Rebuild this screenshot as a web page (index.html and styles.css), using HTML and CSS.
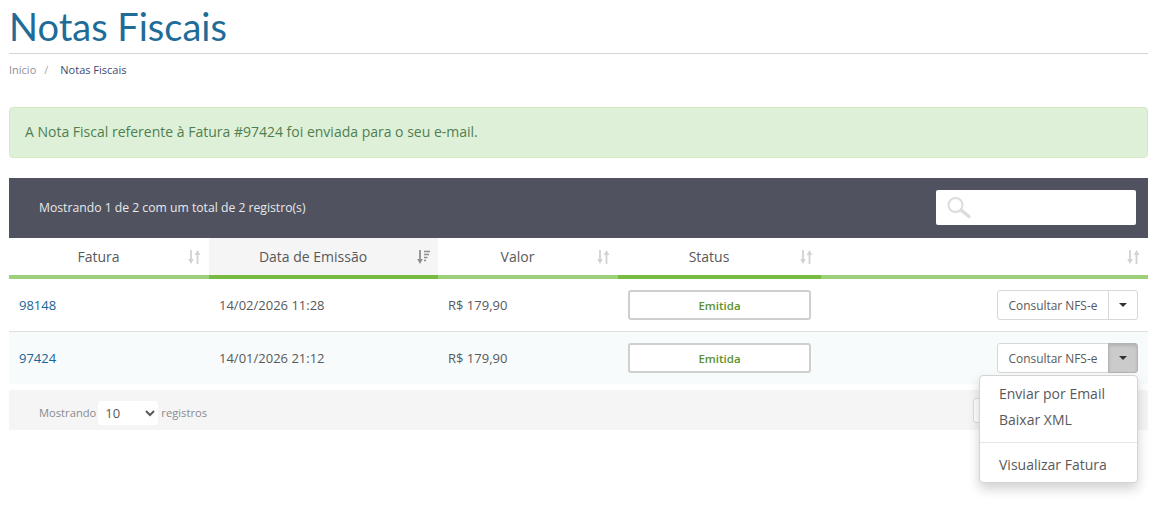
FILE: index.html
```html
<!DOCTYPE html>
<html lang="pt-BR">
<head>
<meta charset="utf-8">
<title>Notas Fiscais</title>
<link rel="stylesheet" href="styles.css">
</head>
<body>
<svg class="defs" width="0" height="0" aria-hidden="true">
  <symbol id="sort" viewBox="0 0 14 14">
    <path d="M4 0v11" fill="none" stroke="currentColor" stroke-width="1.8"/>
    <path d="M1.2 9h5.6L4 14z" fill="currentColor"/>
    <path d="M10.5 14V3" fill="none" stroke="currentColor" stroke-width="1.8"/>
    <path d="M7.7 5h5.6L10.5 0z" fill="currentColor"/>
  </symbol>
  <symbol id="sort-active" viewBox="0 0 14 14">
    <path d="M4 0v11" fill="none" stroke="currentColor" stroke-width="1.8"/>
    <path d="M1.2 9h5.6L4 14z" fill="currentColor"/>
    <path d="M8 1.5h6M8 4.5h5M8 7.5h3.5M8 10.5h2" stroke="currentColor" stroke-width="1.6"/>
  </symbol>
</svg>
<main class="page">
  <h1 class="title">Notas Fiscais</h1>
  <nav class="crumbs"><a href="#">Início</a><span class="sep">/</span><span class="current">Notas Fiscais</span></nav>
  <div class="alert">A Nota Fiscal referente à Fatura #97424 foi enviada para o seu e-mail.</div>

  <section class="listing">
    <header class="list-head">
      <span>Mostrando 1 de 2 com um total de 2 registro(s)</span>
      <label class="search">
        <svg class="search-icon" viewBox="0 0 26 24" width="26" height="24"><circle cx="9.5" cy="9" r="7" fill="none" stroke="currentColor" stroke-width="2"/><path d="m15 14 8 6.5" stroke="currentColor" stroke-width="3.4" stroke-linecap="round"/></svg>
        <input type="text" aria-label="Buscar">
      </label>
    </header>
    <table class="grid">
      <colgroup><col class="c1"><col class="c2"><col class="c3"><col class="c4"><col></colgroup>
      <thead>
        <tr>
          <th><span class="th-label">Fatura</span><svg class="sort-icon"><use href="#sort"/></svg></th>
          <th class="sorted"><span class="th-label">Data de Emissão</span><svg class="sort-icon"><use href="#sort-active"/></svg></th>
          <th><span class="th-label">Valor</span><svg class="sort-icon"><use href="#sort"/></svg></th>
          <th class="status-head"><span class="th-label">Status</span><svg class="sort-icon"><use href="#sort"/></svg></th>
          <th><svg class="sort-icon"><use href="#sort"/></svg></th>
        </tr>
      </thead>
      <tbody>
        <tr>
          <td><a href="#" class="id">98148</a></td>
          <td>14/02/2026 11:28</td>
          <td>R$ 179,90</td>
          <td><span class="status">Emitida</span></td>
          <td class="actions"><span class="split"><button class="btn">Consultar NFS-e</button><button class="caret-btn"><i class="caret"></i></button></span></td>
        </tr>
        <tr class="hover">
          <td><a href="#" class="id">97424</a></td>
          <td>14/01/2026 21:12</td>
          <td>R$ 179,90</td>
          <td><span class="status">Emitida</span></td>
          <td class="actions"><span class="split"><button class="btn">Consultar NFS-e</button><button class="caret-btn open"><i class="caret"></i></button></span></td>
        </tr>
      </tbody>
    </table>
    <footer class="list-foot">
      <span>Mostrando</span>
      <select class="size" aria-label="Registros"><option>10</option></select>
      <span>registros</span>
      <span class="pager"></span>
    </footer>
    <ul class="menu">
      <li><a href="#">Enviar por Email</a></li>
      <li><a href="#">Baixar XML</a></li>
      <li class="divider"></li>
      <li><a href="#">Visualizar Fatura</a></li>
    </ul>
  </section>
</main>
</body>
</html>
```
FILE: styles.css
```css
* { box-sizing: border-box; }
html, body { margin: 0; }
body {
  font-family: "Open Sans", "Liberation Sans", sans-serif;
  font-size: 13px;
  color: #58595b;
  background: #fff;
  height: 513px;
  overflow: hidden;
}
.defs { position: absolute; }
.page { padding: 0 20px 0 9px; }
.title {
  margin: 0;
  height: 54px;
  padding-top: 4px;
  font-family: Lato, "Open Sans", sans-serif;
  font-weight: 400;
  font-size: 38px;
  line-height: 44px;
  color: #1f6c99;
  border-bottom: 1px solid #d5d5d5;
}
.crumbs {
  height: 53px;
  padding-top: 9px;
  font-size: 11px;
  line-height: 14px;
}
.crumbs a { color: #8f9097; text-decoration: none; }
.crumbs .sep { color: #a9a9ad; margin: 0 12px 0 8px; }
.crumbs .current { color: #3c4a72; }
.alert {
  height: 51px;
  padding: 0 15px;
  line-height: 48px;
  font-size: 14px;
  color: #4f7f50;
  background: #dff0d8;
  border: 1px solid #d6e9c6;
  border-radius: 4px;
}
.listing { position: relative; margin-top: 20px; }
.list-head {
  height: 60px;
  padding: 0 12px 2px 30px;
  display: flex;
  align-items: center;
  justify-content: space-between;
  background: #50535f;
  color: #e8e8ea;
  font-size: 12.2px;
}
.search {
  position: relative;
  display: block;
  width: 200px;
  height: 35px;
  background: #fff;
  border-radius: 2px;
}
.search input {
  width: 100%;
  height: 100%;
  border: 0;
  background: transparent;
}
.search-icon {
  position: absolute;
  left: 10px;
  top: 6px;
  color: #dcdcdc;
}
.grid {
  width: 100%;
  border-collapse: separate;
  border-spacing: 0;
  table-layout: fixed;
}
.c1 { width: 200px; }
.c2 { width: 229px; }
.c3 { width: 180px; }
.c4 { width: 203px; }
.grid th {
  position: relative;
  height: 41px;
  padding: 0 21px 0 0;
  font-weight: 400;
  font-size: 14px;
  color: #58595b;
  text-align: center;
  border-bottom: 4px solid #9dd07a;
}
.grid th.sorted { background: #f5f5f5; border-bottom-color: #77bb41; }
.grid th.status-head { border-bottom-color: #77bb41; }
.sort-icon {
  position: absolute;
  right: 8px;
  top: 12px;
  width: 14px;
  height: 14px;
  color: #d2d2d2;
}
.sorted .sort-icon { color: #8e8e8e; }
.grid td {
  height: 53px;
  padding: 0 10px;
  font-size: 13px;
  border-bottom: 1px solid #dfdfdf;
  vertical-align: middle;
}
.grid tr:last-child td { height: 52px; border-bottom: 0; }
.hover td { background: #f7fbfc; }
.id { color: #1a6595; text-decoration: none; }
.status {
  display: block;
  width: 183px;
  height: 30px;
  line-height: 27px;
  text-align: center;
  font-size: 11.5px;
  font-weight: 600;
  color: #5b9130;
  background: #fff;
  border: 2px solid #cfcfcf;
  border-radius: 3px;
}
.actions { text-align: right; }
.split { display: inline-flex; vertical-align: middle; }
.btn, .caret-btn {
  height: 30px;
  font: inherit;
  font-size: 11.9px;
  color: #58595b;
  background: #fff;
  border: 1px solid #d7d7d7;
  padding: 0;
}
.btn { width: 112px; border-radius: 3px 0 0 3px; }
.caret-btn {
  width: 30px;
  margin-left: -1px;
  border-radius: 0 3px 3px 0;
  display: flex;
  align-items: center;
  justify-content: center;
}
.caret-btn.open {
  background: #cbcbcb;
  border-color: #b4b4b4;
  box-shadow: inset 0 2px 3px rgba(0, 0, 0, .12);
}
.caret {
  display: block;
  border-left: 4px solid transparent;
  border-right: 4px solid transparent;
  border-top: 4px solid #333;
}
.list-foot {
  position: relative;
  height: 40px;
  margin-top: 6px;
  padding: 4px 0 0 30px;
  display: flex;
  align-items: center;
  gap: 2px;
  background: #f5f5f5;
  font-size: 11.2px;
  color: #8a8b90;
}
.size {
  width: 60px;
  height: 24px;
  margin: 2px 1px 0 0;
  padding: 0 0 0 3px;
  border: 0;
  border-radius: 4px;
  background: #fff;
  font: inherit;
  font-size: 13px;
  color: #58595b;
}
.pager {
  position: absolute;
  left: 964px;
  top: 8px;
  width: 60px;
  height: 25px;
  background: #fff;
  border: 1px solid #ddd;
  border-radius: 3px;
}
.menu {
  position: absolute;
  left: 970px;
  top: 197px;
  width: 159px;
  height: 108px;
  margin: 0;
  padding: 5px 0;
  list-style: none;
  background: #fff;
  border: 1px solid #d4d4d4;
  border-radius: 4px;
  box-shadow: 0 6px 12px rgba(0, 0, 0, .18);
}
.menu a {
  display: block;
  padding: 0 19px;
  line-height: 26px;
  font-size: 14px;
  color: #58595b;
  text-decoration: none;
  white-space: nowrap;
}
.divider { height: 1px; margin: 9px 0; background: #e5e5e5; }
```
